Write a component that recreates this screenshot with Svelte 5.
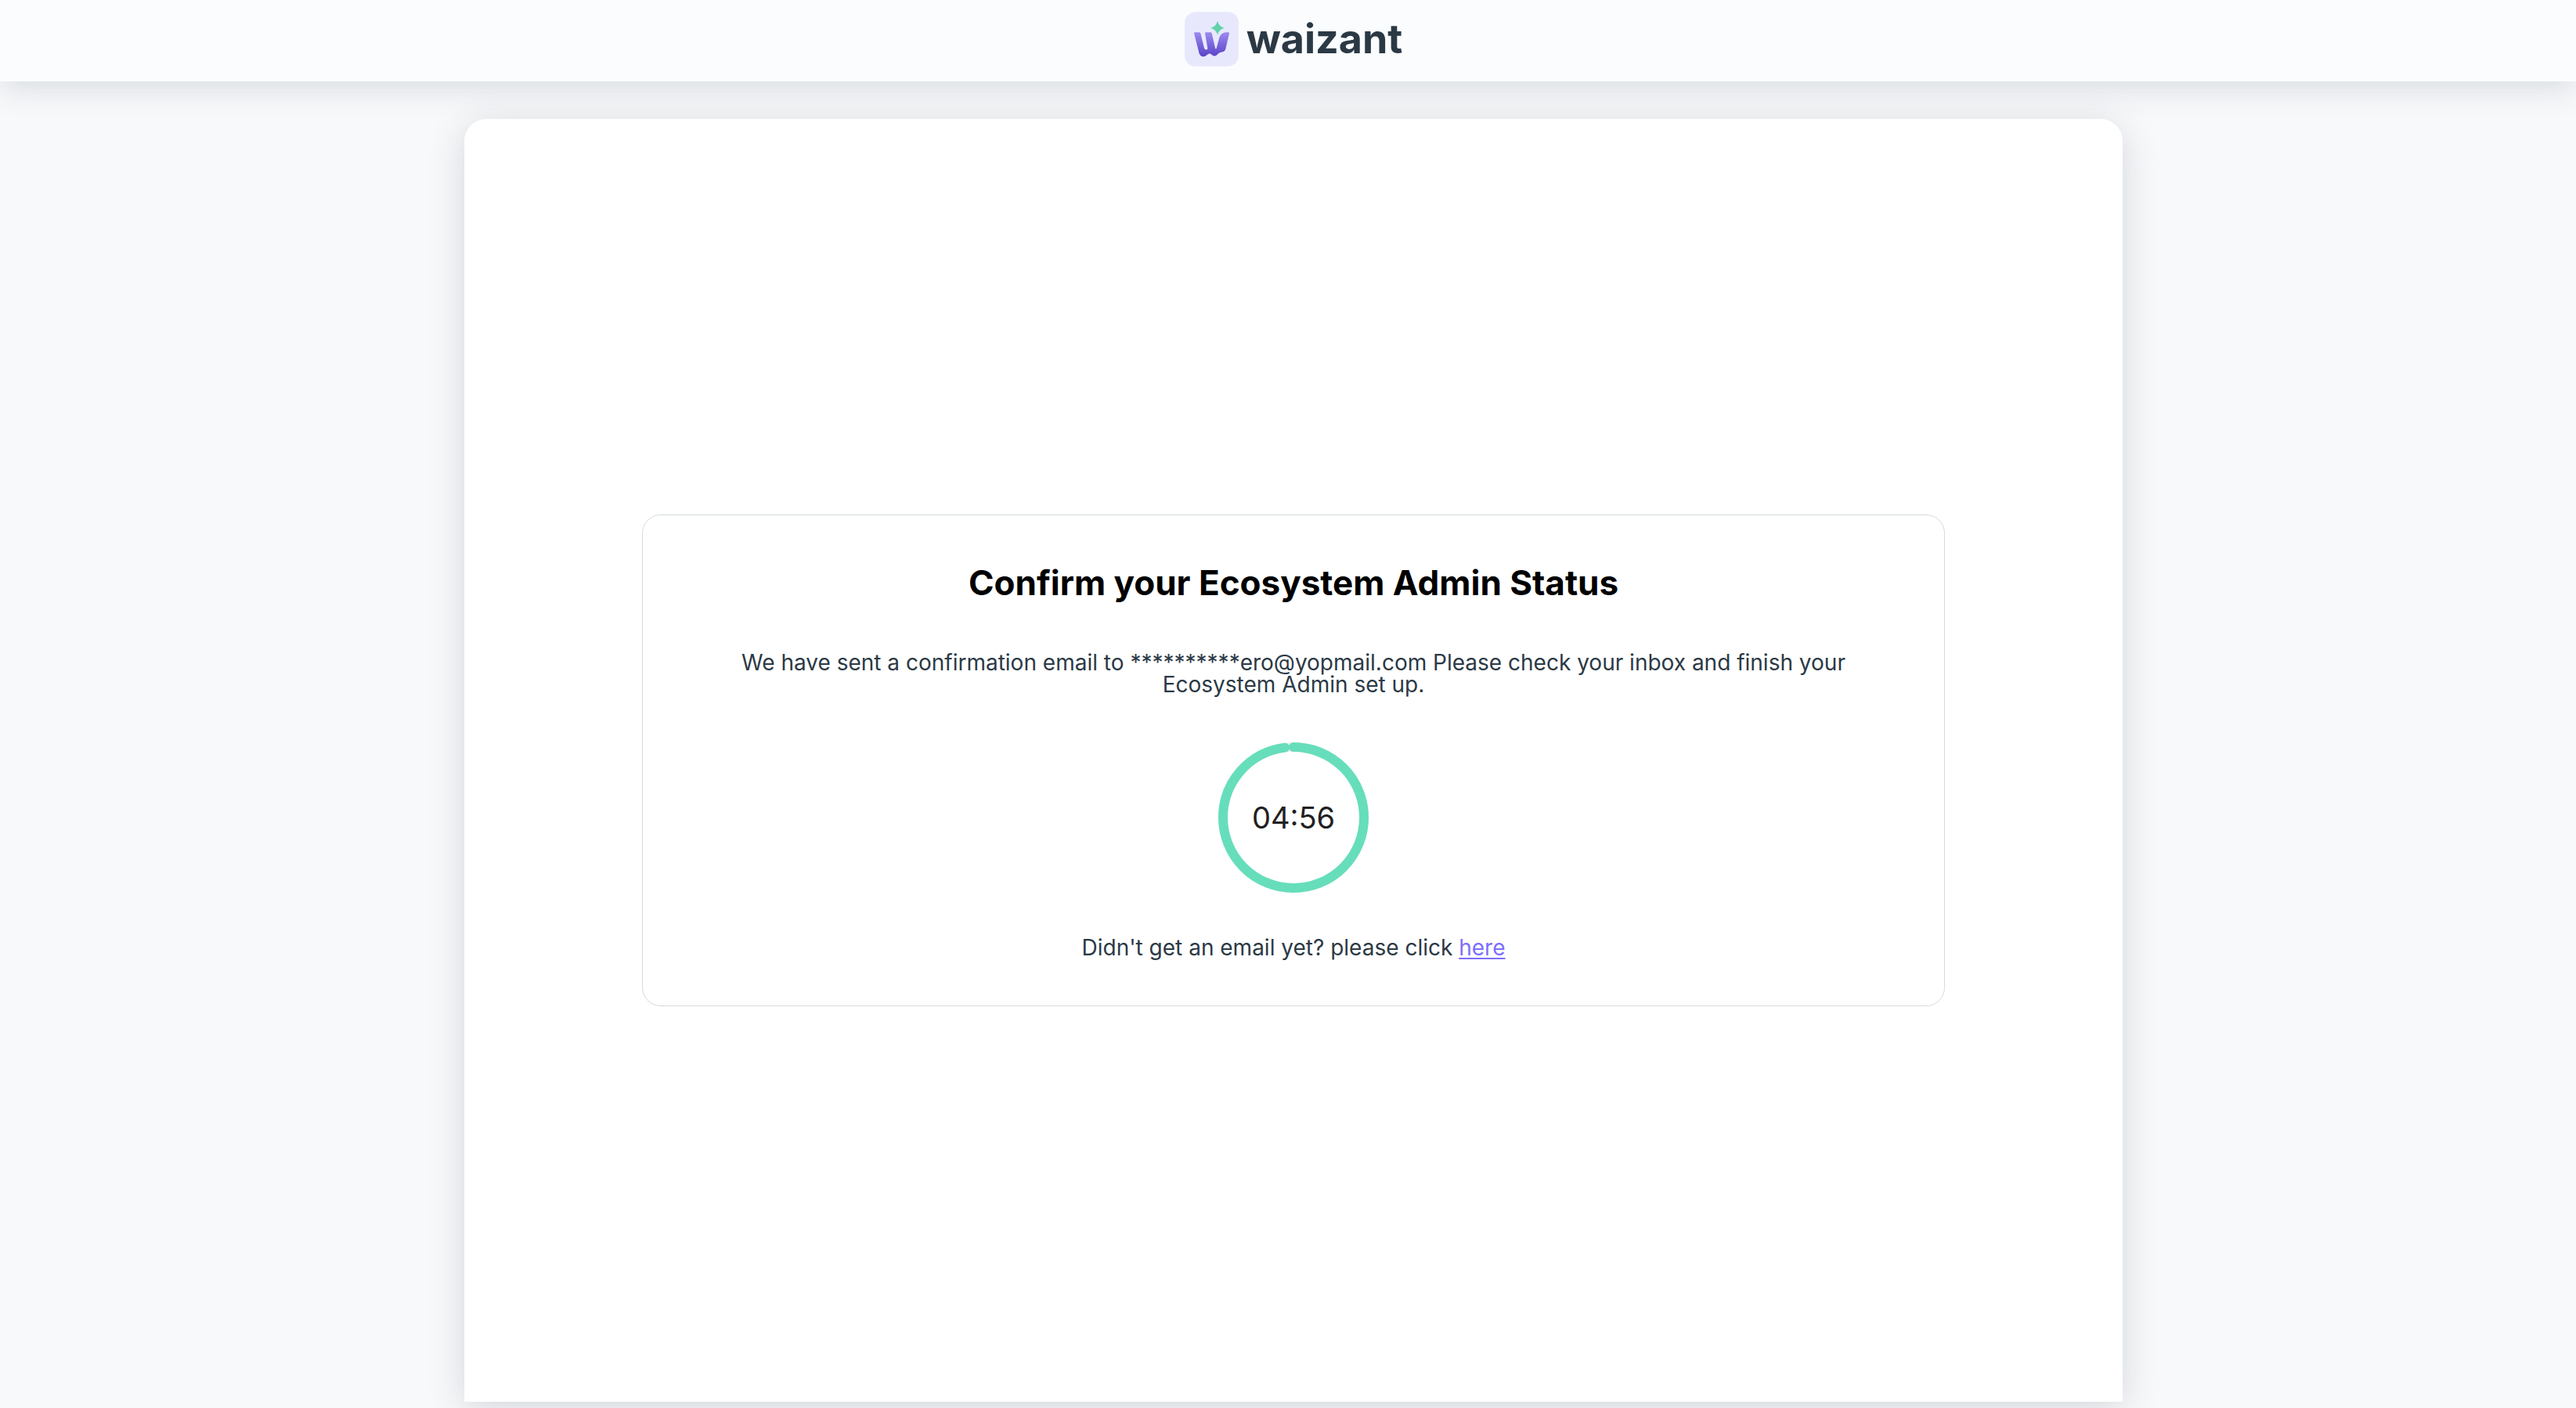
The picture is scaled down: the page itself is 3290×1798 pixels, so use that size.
<script>
  const totalSeconds = 300;
  const secondsLeft = 296;
  const radius = 90;
  const circumference = 2 * Math.PI * radius;
  const arc = 0.979 * circumference;

  const pad = (n) => String(n).padStart(2, '0');
  const clock = `${pad(Math.floor(secondsLeft / 60))}:${pad(secondsLeft % 60)}`;
</script>

<div class="page">
  <header>
    <div class="brand">
      <svg class="mark" viewBox="0 0 207 209" aria-hidden="true">
        <defs>
          <linearGradient id="stroke-fill" x1="0" y1="0" x2="0" y2="1">
            <stop offset="0" stop-color="#9a8bee" />
            <stop offset="1" stop-color="#5b42c8" />
          </linearGradient>
        </defs>
        <rect width="207" height="209" rx="42" fill="#e8e8fd" />
        <path
          fill="url(#stroke-fill)"
          d="M36 82Q36 78 40 78H55Q60 78 61 82L75 139Q77 145 82 145Q89 145 88 139L78 82Q78 78 82 78H98Q103 78 104 82L117 138Q119 145 122 139L133 98Q139 80 157 78H167Q171 78 171 82L157 142Q154 153 143 154Q135 154 129 160Q120 171 110 168Q102 164 98 160Q93 159 88 163Q78 173 68 171Q59 169 56 160Z"
        />
        <path
          fill="#5fd3aa"
          d="M126 35Q131 56 152 62Q131 68 126 89Q121 68 99 62Q121 56 126 35Z"
        />
      </svg>
      <span class="name">waizant</span>
    </div>
  </header>

  <main>
    <section class="sheet">
      <div class="panel">
        <h1>Confirm your Ecosystem Admin Status</h1>
        <p class="message">
          We have sent a confirmation email to **********ero@yopmail.com Please check your inbox and
          finish your Ecosystem Admin set up.
        </p>
        <div class="timer" role="timer" aria-label={`${secondsLeft} of ${totalSeconds} seconds left`}>
          <svg viewBox="0 0 192 192" aria-hidden="true">
            <circle class="trail" cx="96" cy="96" r={radius} />
            <circle
              class="arc"
              cx="96"
              cy="96"
              r={radius}
              stroke-dasharray={`${arc} ${circumference}`}
              transform="rotate(-90 96 96)"
            />
          </svg>
          <span>{clock}</span>
        </div>
        <p>Didn't get an email yet? please click <a href="#resend">here</a></p>
      </div>
    </section>
  </main>
</div>

<style>
  :global(body) {
    margin: 0;
    background: #f8f9fb;
  }

  .page {
    display: flex;
    flex-direction: column;
    min-height: 100vh;
    overflow: hidden;
    font-family: Inter, 'Open Sans', sans-serif;
    color: #2b3945;
  }

  header {
    display: flex;
    justify-content: center;
    box-sizing: border-box;
    height: 104px;
    padding: 15px 0 0 14px;
    background: #fafcfe;
    box-shadow: 0 8px 40px rgba(43, 60, 72, 0.16);
  }

  .brand {
    display: flex;
    align-items: center;
    gap: 10px;
    height: 70px;
  }

  .mark {
    width: 69px;
    height: 70px;
  }

  .name {
    font-size: 52px;
    line-height: 72px;
    font-weight: 700;
  }

  main {
    display: flex;
    flex: 1;
    justify-content: center;
    padding: 48px 0 8px 14px;
  }

  .sheet {
    display: flex;
    align-items: center;
    justify-content: center;
    box-sizing: border-box;
    width: 90%;
    max-width: 2118px;
    padding: 48px;
    border-radius: 28px 28px 0 0;
    background: #fff;
    box-shadow: 0 8px 48px rgba(43, 60, 72, 0.18);
  }

  .panel {
    display: flex;
    flex-direction: column;
    align-items: center;
    box-sizing: border-box;
    width: 100%;
    max-width: 1664px;
    padding: 54px 112px 60px;
    border: 1px solid #d5dbe1;
    border-radius: 24px;
    text-align: center;
  }

  h1 {
    margin: 0 0 56px;
    font-size: 44px;
    line-height: 64px;
    font-weight: 700;
    color: #000;
  }

  p {
    margin: 0;
    font-size: 28px;
    line-height: 28px;
  }

  .timer {
    display: grid;
    place-items: center;
    margin: 60px 0 56px;
  }

  .timer svg,
  .timer span {
    grid-area: 1 / 1;
  }

  .timer svg {
    width: 192px;
    height: 192px;
    fill: none;
    stroke-width: 12;
  }

  .trail {
    stroke: #eee;
  }

  .arc {
    stroke: #66debb;
    stroke-linecap: round;
  }

  .timer span {
    font-size: 38px;
    line-height: 48px;
    color: #212121;
  }

  a {
    color: #7b6ffb;
    text-decoration: underline 2px;
    text-underline-offset: 3px;
  }
</style>
